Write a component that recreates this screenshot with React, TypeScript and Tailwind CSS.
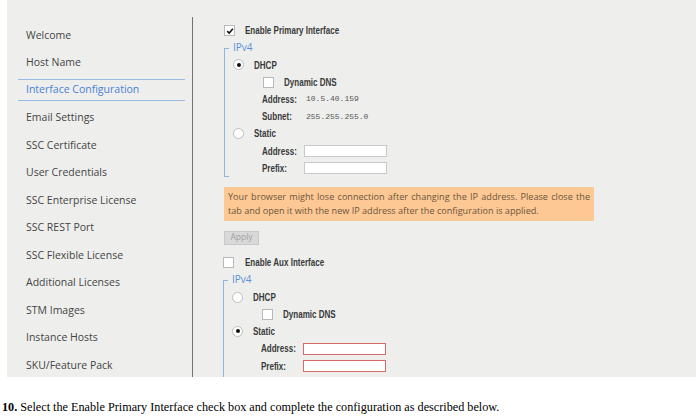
import type { ReactNode } from "react";

const NAV = [
  "Welcome",
  "Host Name",
  "Interface Configuration",
  "Email Settings",
  "SSC Certificate",
  "User Credentials",
  "SSC Enterprise License",
  "SSC REST Port",
  "SSC Flexible License",
  "Additional Licenses",
  "STM Images",
  "Instance Hosts",
  "SKU/Feature Pack",
];

const ACTIVE = "Interface Configuration";

function Checkbox({ checked = false }: { checked?: boolean }) {
  return (
    <span className="flex h-[11px] w-[11px] shrink-0 items-center justify-center border border-[#b8b8b8] bg-white">
      {checked && (
        <svg viewBox="0 0 10 10" className="h-[8px] w-[8px]">
          <path d="M1.5 5.2 L4 7.6 L8.6 2.2" fill="none" stroke="#111" strokeWidth="1.9" />
        </svg>
      )}
    </span>
  );
}

function Radio({ checked = false }: { checked?: boolean }) {
  return (
    <span className="flex h-[11px] w-[11px] shrink-0 items-center justify-center rounded-full border border-[#bcbcbc] bg-white">
      {checked && <span className="h-[4px] w-[4px] rounded-full bg-[#111]" />}
    </span>
  );
}

// the form labels use a narrow bold face; squeeze a regular one to match
function Narrow({ children, className = "" }: { children: ReactNode; className?: string }) {
  return (
    <span className={`inline-block origin-left scale-x-[0.73] whitespace-nowrap ${className}`}>{children}</span>
  );
}

function Row({ children, className = "" }: { children: ReactNode; className?: string }) {
  return <div className={`flex h-[17.2px] items-center ${className}`}>{children}</div>;
}

function Label({ children, className = "w-[42px]" }: { children: ReactNode; className?: string }) {
  return (
    <span className={`shrink-0 ${className}`}>
      <Narrow>{children}</Narrow>
    </span>
  );
}

function TextInput({ invalid = false }: { invalid?: boolean }) {
  return (
    <span
      className={`block h-[12px] w-[83px] bg-white border ${
        invalid ? "border-[#d46b6b]" : "border-[#c9c9c9]"
      }`}
    />
  );
}

function Fieldset({ children, open = false }: { children: ReactNode; open?: boolean }) {
  return (
    <div className="flex">
      <div
        className={`mt-[8.6px] w-[5px] shrink-0 border-l border-t border-[#8fb5e2] ${
          open ? "" : "border-b"
        }`}
      />
      <div className="flex-1 pl-[4px]">
        <Row>
          <span className="font-['Open_Sans',sans-serif] text-[10px] font-normal text-[#5a8fd8]">IPv4</span>
        </Row>
        {children}
      </div>
    </div>
  );
}

function Sidebar() {
  return (
    <nav className="w-[185px] shrink-0 pl-[11px] pr-[7px] pt-[22px] font-['Open_Sans',sans-serif] text-[10.5px] text-[#444]">
      {NAV.map((item) =>
        item === ACTIVE ? (
          <div key={item} className="flex h-[27.5px] items-center">
            <div className="-mt-[1px] flex h-[22px] w-full items-center border-y border-[#98bbe4] pl-[8px] text-[#4a80d4]">
              {item}
            </div>
          </div>
        ) : (
          <div key={item} className="flex h-[27.5px] items-center pl-[8px]">
            {item}
          </div>
        ),
      )}
    </nav>
  );
}

export default function App() {
  return (
    <div className="h-[420px] w-[696px] overflow-hidden bg-white">
      <div className="ml-[7px] flex h-[377px] overflow-hidden bg-[#eeefed]">
        <Sidebar />
        <div className="mt-[17px] w-px shrink-0 bg-[#737373]" />

        <div className="flex-1 pl-[31px] pt-[22px] font-['Liberation_Sans',Arial,sans-serif] text-[11px] font-bold text-[#3a3a3a]">
          {/* Primary interface */}
          <Row>
            <Checkbox checked />
            <Narrow className="ml-[10px]">Enable Primary Interface</Narrow>
          </Row>
          <Fieldset>
            <Row>
              <Radio checked />
              <Narrow className="ml-[10px]">DHCP</Narrow>
            </Row>
            <Row className="pl-[30px]">
              <Checkbox />
              <Narrow className="ml-[10px]">Dynamic DNS</Narrow>
            </Row>
            <Row className="pl-[29px]">
              <Label className="w-[44px]">Address:</Label>
              <span className="font-['Liberation_Mono',monospace] text-[8px] font-normal text-[#555]">10.5.40.159</span>
            </Row>
            <Row className="pl-[29px]">
              <Label className="w-[44px]">Subnet:</Label>
              <span className="font-['Liberation_Mono',monospace] text-[8px] font-normal text-[#555]">255.255.255.0</span>
            </Row>
            <Row>
              <Radio />
              <Narrow className="ml-[10px]">Static</Narrow>
            </Row>
            <Row className="pl-[29px]">
              <Label>Address:</Label>
              <TextInput />
            </Row>
            <Row className="pl-[29px]">
              <Label>Prefix:</Label>
              <TextInput />
            </Row>
          </Fieldset>

          <div className="mt-[10px] h-[34px] w-[370px] bg-[#fdc893] px-[4px] pt-[3px] font-['Open_Sans',sans-serif] text-[9.1px] font-normal leading-[14px] text-[#6a5640]">
            <div className="whitespace-nowrap text-justify [text-align-last:justify]">
              Your browser might lose connection after changing the IP address. Please close the
            </div>
            <div>tab and open it with the new IP address after the configuration is applied.</div>
          </div>

          <button
            type="button"
            className="mt-[10px] flex h-[14px] w-[35px] items-center justify-center border border-[#c8c8c8] bg-[#d9d9d9] font-['Open_Sans',sans-serif] text-[8.5px] font-normal text-[#a0a0a0]"
          >
            Apply
          </button>

          {/* Aux interface */}
          <div className="-ml-[1px] mt-[9.4px]">
            <Row>
              <Checkbox />
              <Narrow className="ml-[11px]">Enable Aux Interface</Narrow>
            </Row>
            <Fieldset open>
              <Row>
                <Radio />
                <Narrow className="ml-[10px]">DHCP</Narrow>
              </Row>
              <Row className="pl-[30px]">
                <Checkbox />
                <Narrow className="ml-[10px]">Dynamic DNS</Narrow>
              </Row>
              <Row>
                <Radio checked />
                <Narrow className="ml-[10px]">Static</Narrow>
              </Row>
              <Row className="pl-[29px]">
                <Label>Address:</Label>
                <TextInput invalid />
              </Row>
              <Row className="pl-[29px]">
                <Label>Prefix:</Label>
                <TextInput invalid />
              </Row>
              <div className="h-[20px]" />
            </Fieldset>
          </div>
        </div>
      </div>

      <p className="pl-[2px] pt-[22px] font-['Liberation_Serif',serif] text-[12.2px] leading-[16px] text-black">
        <span className="font-bold">10.</span> Select the Enable Primary Interface check box and complete the
        configuration as described below.
      </p>
    </div>
  );
}
